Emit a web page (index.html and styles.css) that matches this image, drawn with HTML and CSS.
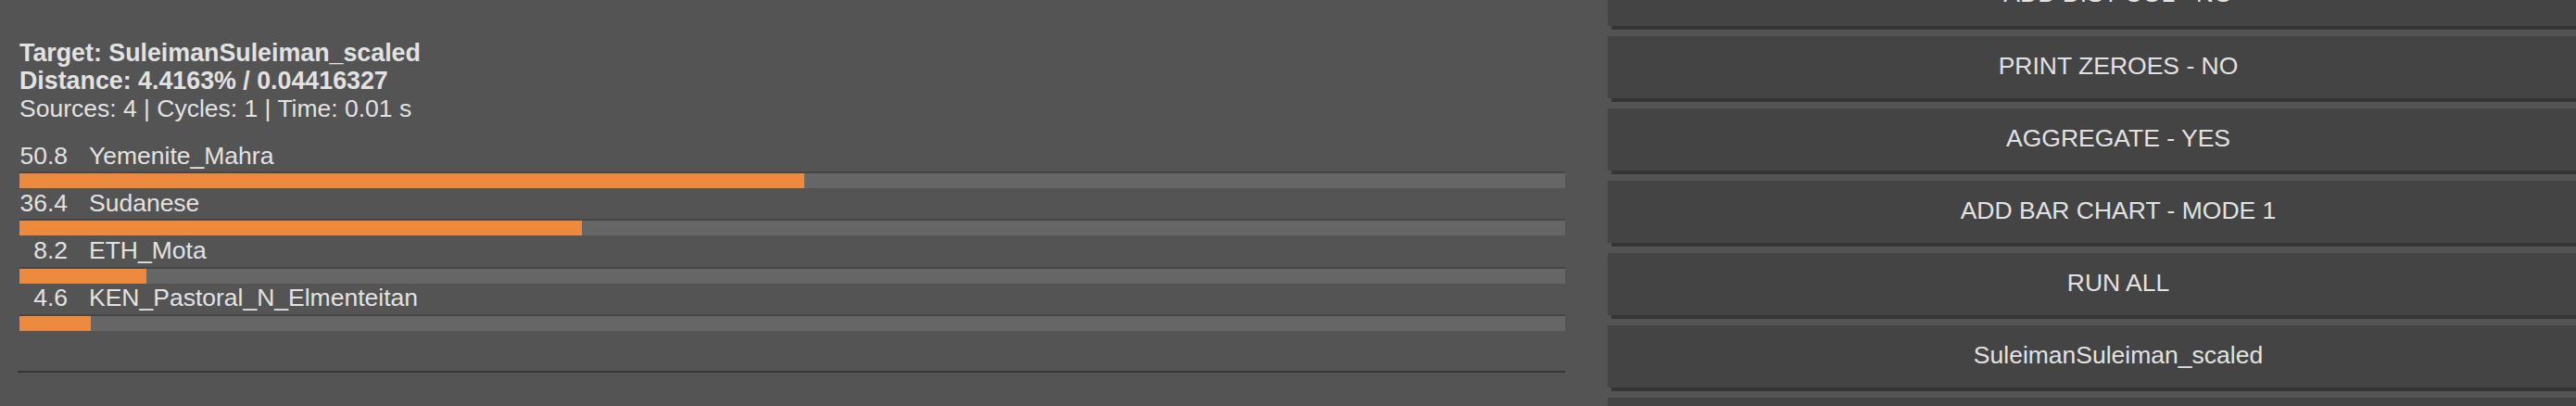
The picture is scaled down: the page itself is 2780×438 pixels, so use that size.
FILE: index.html
```html
<!DOCTYPE html>
<html>
<head>
<meta charset="utf-8">
<link rel="stylesheet" href="styles.css">
</head>
<body>
<div class="app">
  <section class="results">
    <div class="info">
      <div class="line bold">Target: SuleimanSuleiman_scaled</div>
      <div class="line bold">Distance: 4.4163% / 0.04416327</div>
      <div class="line">Sources: 4 | Cycles: 1 | Time: 0.01 s</div>
    </div>
    <div class="rows">
      <div class="row">
        <div class="label"><span class="num">50.8</span><span class="name">Yemenite_Mahra</span></div>
        <div class="track"><div class="fill" style="width:50.8%"></div></div>
      </div>
      <div class="row">
        <div class="label"><span class="num">36.4</span><span class="name">Sudanese</span></div>
        <div class="track"><div class="fill" style="width:36.4%"></div></div>
      </div>
      <div class="row">
        <div class="label"><span class="num">8.2</span><span class="name">ETH_Mota</span></div>
        <div class="track"><div class="fill" style="width:8.2%"></div></div>
      </div>
      <div class="row">
        <div class="label"><span class="num">4.6</span><span class="name">KEN_Pastoral_N_Elmenteitan</span></div>
        <div class="track"><div class="fill" style="width:4.6%"></div></div>
      </div>
    </div>
    <div class="divider"></div>
  </section>
  <aside class="buttons">
    <div class="btn">ADD DIST COL - NO</div>
    <div class="btn">PRINT ZEROES - NO</div>
    <div class="btn">AGGREGATE - YES</div>
    <div class="btn">ADD BAR CHART - MODE 1</div>
    <div class="btn">RUN ALL</div>
    <div class="btn">SuleimanSuleiman_scaled</div>
    <div class="btn"></div>
  </aside>
</div>
</body>
</html>
```

FILE: styles.css
```css
html, body {
  margin: 0;
  padding: 0;
  height: 438px;
  overflow: hidden;
  background: #545454;
}
body {
  font-family: "Liberation Sans", Arial, Helvetica, sans-serif;
  color: #e2e2e2;
  font-size: 26.5px;
}
.app {
  display: flex;
  align-items: flex-start;
}
.results {
  flex: 0 0 1668px;
  width: 1668px;
  margin-left: 21px;
  margin-right: 46px;
  padding-top: 41.5px;
}
.line {
  line-height: 30px;
  white-space: nowrap;
}
.bold {
  font-weight: bold;
  font-size: 26.8px;
}
.rows {
  margin-top: 21px;
}
.label {
  display: flex;
  line-height: 30.5px;
  white-space: nowrap;
}
.num {
  width: 52px;
  text-align: right;
  margin-right: 23px;
}
.track {
  margin-top: 2px;
  border-top: 2px solid #454545;
  height: 16px;
  background: #666666;
  margin-bottom: 0.83px;
}
.fill {
  height: 100%;
  background: #ee8a3d;
}
.divider {
  margin-top: 43.5px;
  margin-left: -2px;
  height: 2px;
  background: #363636;
}
.buttons {
  flex: 0 0 1102px;
  width: 1102px;
  margin-top: -39px;
}
.btn {
  box-sizing: border-box;
  height: 67px;
  line-height: 64px;
  padding-bottom: 3px;
  margin-bottom: 11px;
  background: #444444;
  box-shadow: 4px 4px 0 #353535;
  text-align: center;
  white-space: nowrap;
}
```
